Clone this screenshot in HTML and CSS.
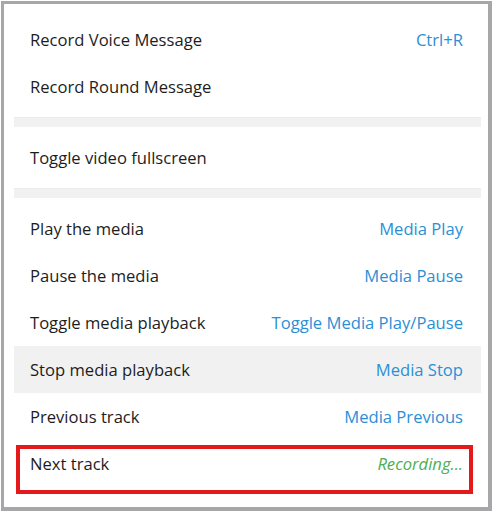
FILE: index.html
```html
<!DOCTYPE html>
<html lang="en">

<head>
    <meta charset="UTF-8">
    <meta name="viewport" content="width=device-width, initial-scale=1.0">
    <title>Keyboard shortcuts</title>
    <link rel="stylesheet" href="styles.css">
</head>

<body>

    <section class="shortcuts">
        <ul class="group">
            <li class="row"><span class="name">Record Voice Message</span><span class="keys">Ctrl+R</span></li>
            <li class="row"><span class="name">Record Round Message</span><span class="keys"></span></li>
        </ul>

        <div class="sep"></div>

        <ul class="group">
            <li class="row"><span class="name">Toggle video fullscreen</span><span class="keys"></span></li>
        </ul>

        <div class="sep"></div>

        <ul class="group">
            <li class="row"><span class="name">Play the media</span><span class="keys">Media Play</span></li>
            <li class="row"><span class="name">Pause the media</span><span class="keys">Media Pause</span></li>
            <li class="row"><span class="name">Toggle media playback</span><span class="keys">Toggle Media Play/Pause</span></li>
            <li class="row hover"><span class="name">Stop media playback</span><span class="keys">Media Stop</span></li>
            <li class="row"><span class="name">Previous track</span><span class="keys">Media Previous</span></li>
            <li class="row marked"><span class="name">Next track</span><span class="keys recording">Recording...</span></li>
        </ul>
    </section>

</body>

</html>
```

FILE: styles.css
```css
html, body { margin: 0; padding: 0; background: #fff;}
body { font-family: "Open Sans", "Liberation Sans", sans-serif; font-size: 16.6px; color: #1d1d1d;}
.shortcuts { box-sizing: border-box; margin: 1px 0 0 1px; width: 491px; height: 510px; padding: 12px 7px 0 10px; border: solid #a7a7a9; border-width: 3px 4px 4px 3px; overflow: hidden;}
.shortcuts .group { list-style: none; margin: 0; padding: 0;}
.shortcuts .row { position: relative; display: flex; justify-content: space-between; align-items: center; height: 47px; padding: 0 18px 0 16px;}
.shortcuts .row.hover { background: #f1f1f1;}
.shortcuts .keys { color: #2b8fd6;}
.shortcuts .keys.recording { color: #4caf50; font-style: italic;}
.shortcuts .sep { height: 10px; margin: 7px 0; background: #f1f1f1; border-top: 1px solid #ebebeb; box-sizing: border-box;}
.shortcuts .marked::after { content: ""; position: absolute; left: 2px; top: 5px; width: 457px; height: 49px; box-sizing: border-box; border: 4px solid #e3191b;}
```
